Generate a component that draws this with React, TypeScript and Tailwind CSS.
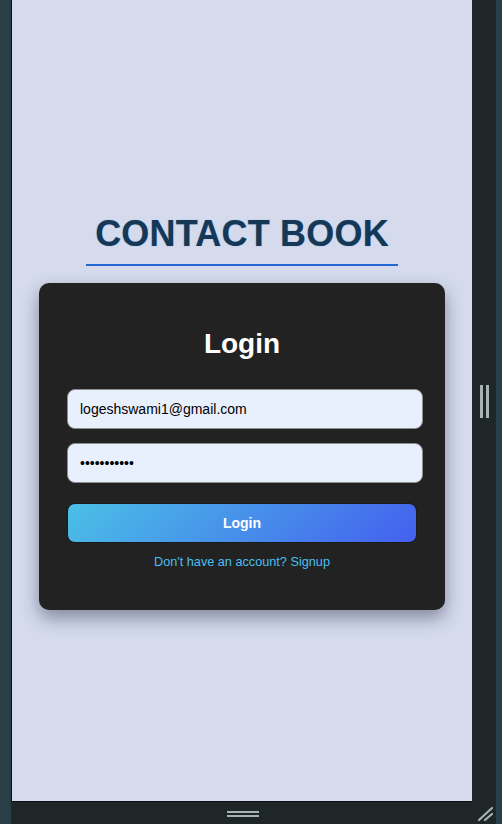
export default function App() {
  return (
    <div className="flex w-[502px] h-[824px] bg-[#1f2628] overflow-hidden font-['Liberation_Sans',Arial,sans-serif]">
      <div className="w-[11px] h-full bg-[#2a3f45]" />

      <div className="flex flex-col w-[485px]">
        <div className="flex h-[802px]">
          {/* page viewport */}
          <main className="w-[461px] h-full border-l border-b border-[#0d1112] bg-[#d5dbed] flex flex-col items-center pt-[214px]">
            <h1 className="px-[9px] pb-[10px] text-[36px] leading-[40px] font-bold tracking-[0.2px] text-[#153857] border-b-2 border-[#2468d4] [text-shadow:0_0_1px_rgba(40,110,210,0.5)]">
              CONTACT BOOK
            </h1>

            <div className="mt-[17px] w-[406px] rounded-[10px] bg-[#222222] px-[28px] pt-[45px] pb-[40px] shadow-[0_8px_18px_rgba(30,35,60,0.45)]">
              <h2 className="text-center text-[28px] leading-[32px] font-bold text-white">Login</h2>

              <div className="mt-[29px] flex flex-col gap-[14px]">
                <input
                  readOnly
                  type="email"
                  value="logeshswami1@gmail.com"
                  className="w-[356px] h-[40px] rounded-lg border border-[#8d8d8d] bg-[#e8f0fe] px-3 text-[14px] text-black font-['Liberation_Sans',Arial,sans-serif] outline-none"
                />
                <input
                  readOnly
                  type="password"
                  value="abcdefghijk"
                  className="w-[356px] h-[40px] rounded-lg border border-[#8d8d8d] bg-[#e8f0fe] px-3 text-[14px] text-black font-['Liberation_Sans',Arial,sans-serif] outline-none"
                />
              </div>

              <button className="mt-[20px] w-full h-[40px] rounded-lg border border-[#1a1a1a] bg-[linear-gradient(135deg,#4ac0e6,#4460ee)] text-[14px] font-bold text-white">
                Login
              </button>

              <p className="mt-[12px] text-center text-[12.7px] leading-[15px] text-[#4cbff2]">
                Don't have an account? Signup
              </p>
            </div>
          </main>

          <div className="flex-1 flex items-center justify-center gap-[3px]">
            <span className="w-[3px] h-[33px] bg-[#a9b2b2]" />
            <span className="w-[3px] h-[33px] bg-[#a9b2b2]" />
          </div>
        </div>

        <div className="relative h-[22px]">
          <div className="absolute left-[216px] top-[9px] flex flex-col gap-[2px]">
            <span className="w-[32px] h-[2px] bg-[#a9b2b2]" />
            <span className="w-[32px] h-[2px] bg-[#a9b2b2]" />
          </div>
          <svg className="absolute left-[466px] top-[4px]" width="18" height="16" viewBox="0 0 18 16">
            <path d="M2 14 L15 2 M8 14 L15 8" stroke="#a9b2b2" strokeWidth="2.2" strokeLinecap="round" />
          </svg>
        </div>
      </div>

      <div className="w-[6px] h-full bg-[#2a3f45]" />
    </div>
  );
}
